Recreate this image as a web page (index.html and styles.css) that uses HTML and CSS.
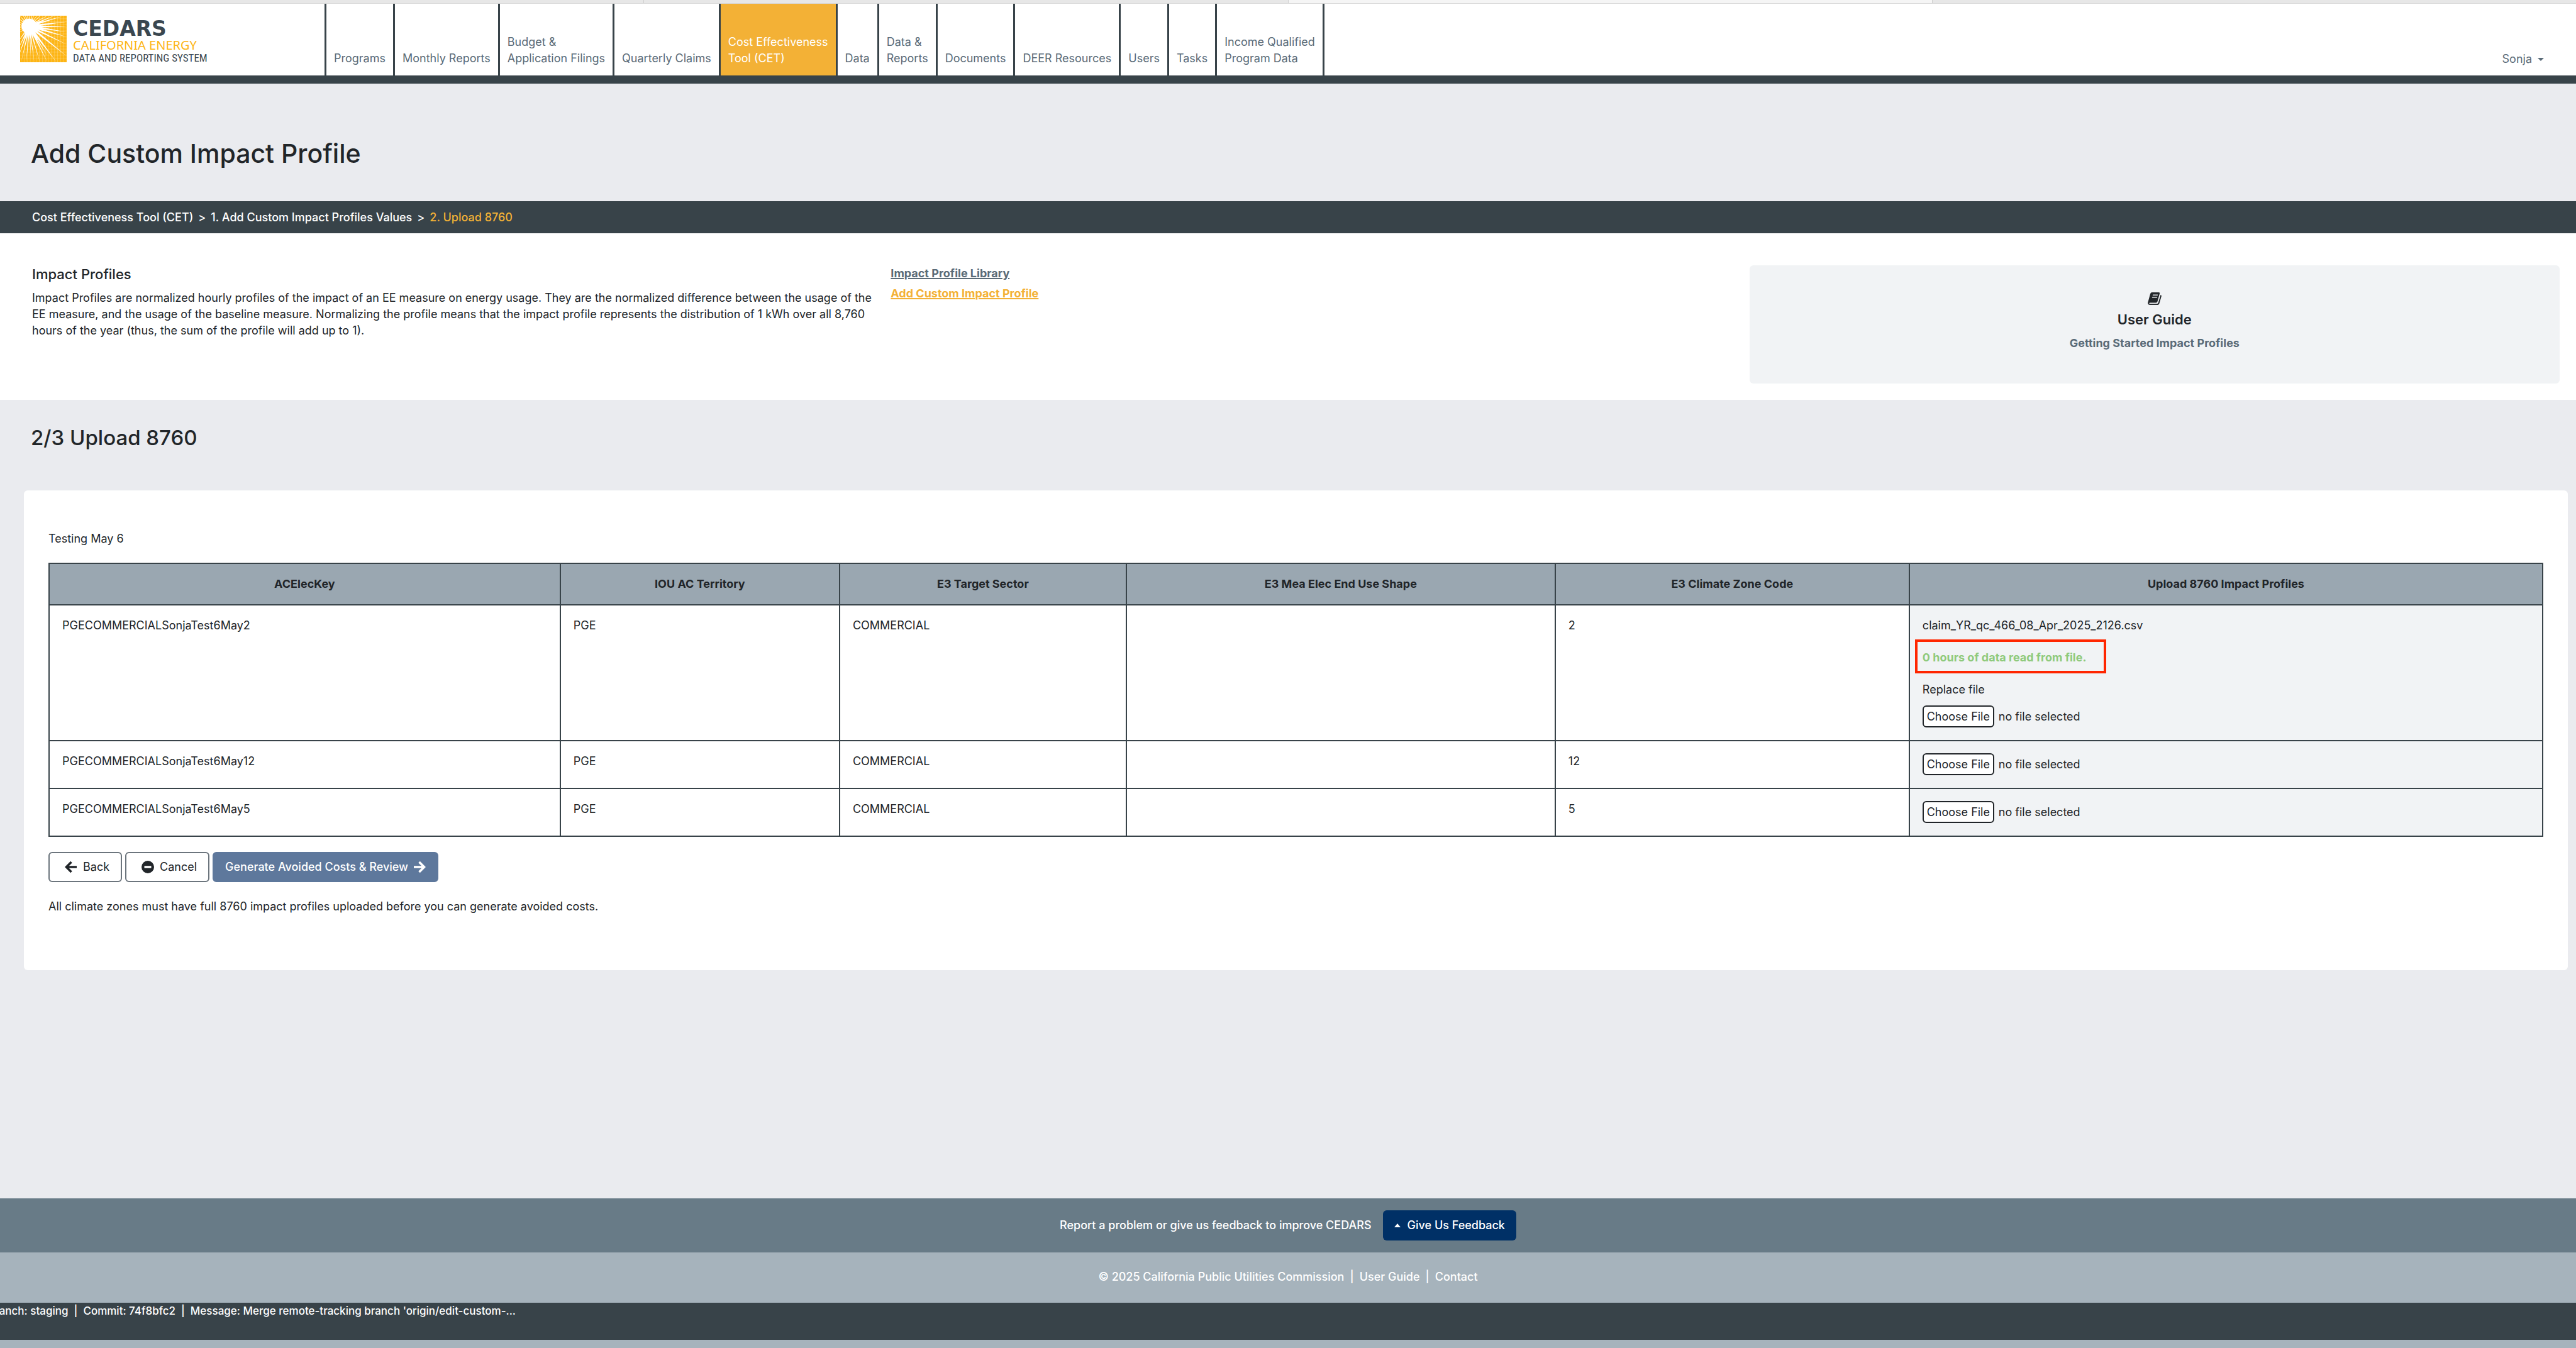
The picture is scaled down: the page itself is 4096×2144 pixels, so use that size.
FILE: index.html
```html
<!DOCTYPE html>
<html lang="en">
<head>
<meta charset="utf-8">
<meta name="viewport" content="width=device-width, initial-scale=1">
<title>CEDARS - Add Custom Impact Profile</title>
<link rel="stylesheet" href="styles.css">
</head>
<body>
<div class="tab-strip"><span></span><span></span><span class="current"></span><span></span></div>
<header class="site-header">
  <a class="logo" href="#">
    <svg class="logo-sun" viewBox="0 0 92 92" aria-hidden="true">
      <rect width="92" height="92" fill="#fdb515"/>
      <path d="M32 6H92M32 12H92M32 18H92M32 24H92M32 30H92M32 36H92M32 42H92M26 48H92M20 54H92M14 60H92M8 66H92M0 72H92M0 78H92M0 84H92M38 0V92M44 0V92M50 0V92M56 0V92M62 0V92M68 0V92M74 0V92M80 0V92M86 0V92M32 30V92M26 36V92M20 40V92M14 40V92M8 40V92" stroke="#fff" stroke-opacity=".28" stroke-width="1"/>
      <g fill="#fff">
        <circle cx="18" cy="21" r="15"/>
        <path d="M17 21 2 92 20 21ZM17 21 12 92 20 21ZM17 21 21 80 20 21ZM17 21 28 92 20 21ZM17 21 39 92 20 20ZM17 22 54 80 20 20ZM17 23 54 92 20 20ZM17 23 72 92 20 19ZM17 23 92 80 20 19ZM17 23 92 57 19 19ZM17 23 92 42 19 18ZM17 23 90 32 19 18ZM17 23 92 22 19 18ZM17 23 92 12 19 18ZM17 23 84 1 19 18ZM17 23 70 -1 19 18ZM17 22 57 -2 17 19ZM16 21 44 -4 19 21ZM16 21 36 -4 19 21ZM16 21 29 -4 19 21ZM16 21 24 -4 20 21ZM16 21 19 -4 20 21ZM16 21 14 -4 20 21ZM16 21 9 -4 20 21ZM16 21 4 -4 20 21ZM17 22 -3 -2 19 20ZM17 22 -4 5 19 19ZM17 23 -6 11 19 19ZM17 23 -6 17 19 19ZM17 23 -6 23 19 19ZM17 23 -6 29 19 19ZM17 23 -6 36 19 19ZM17 23 -6 44 20 21ZM16 21 -6 54 20 21ZM16 21 -4 66 20 21ZM16 21 -3 80 20 21Z"/>
      </g>
    </svg>
    <span class="logo-text">
      <span class="logo-name">CEDARS</span>
      <span class="logo-state">CALIFORNIA ENERGY</span>
      <span class="logo-system">DATA AND REPORTING SYSTEM</span>
    </span>
  </a>
  <nav class="main-nav">
    <a href="#">Programs</a>
    <a href="#">Monthly Reports</a>
    <a href="#">Budget &amp;<br>Application Filings</a>
    <a href="#">Quarterly Claims</a>
    <a href="#" class="active">Cost Effectiveness<br>Tool (CET)</a>
    <a href="#">Data</a>
    <a href="#">Data &amp;<br>Reports</a>
    <a href="#">Documents</a>
    <a href="#">DEER Resources</a>
    <a href="#">Users</a>
    <a href="#">Tasks</a>
    <a href="#">Income Qualified<br>Program Data</a>
  </nav>
  <button class="user-menu" type="button">Sonja <span class="caret"></span></button>
</header>

<main>
  <h1>Add Custom Impact Profile</h1>
  <nav class="breadcrumb">
    <a href="#">Cost Effectiveness Tool (CET)</a><span>&gt;</span><a href="#">1. Add Custom Impact Profiles Values</a><span>&gt;</span><a href="#" class="current">2. Upload 8760</a>
  </nav>

  <section class="intro">
    <div class="intro-text">
      <h2>Impact Profiles</h2>
      <p>Impact Profiles are normalized hourly profiles of the impact of an EE measure on energy usage. They are the normalized difference between the usage of the EE measure, and the usage of the baseline measure. Normalizing the profile means that the impact profile represents the distribution of 1 kWh over all 8,760 hours of the year (thus, the sum of the profile will add up to 1).</p>
    </div>
    <div class="intro-links">
      <a href="#">Impact Profile Library</a>
      <a href="#" class="current">Add Custom Impact Profile</a>
    </div>
    <div class="guide">
      <svg class="book" viewBox="0 0 22 20" aria-hidden="true">
        <path fill="#212529" fill-rule="evenodd" d="M6.500 0H17.500Q19.500 0 19 2L15.500 14.500Q15 16.500 13 16.500H3.500Q2 16.500 2.300 17.500Q2.500 18.300 4 18.300H14.500Q16.300 18.300 16.800 16.500L20.500 4Q22.200 4.500 21.700 6.500L18.500 17.500Q17.700 20 15.500 20H4Q0 20 .2 16.500L4 2.500Q4.700 0 6.500 0ZM8.200 3.500 7.800 5H15.800L16.200 3.500ZM7.200 7 6.800 8.500H14.800L15.200 7Z"/>
      </svg>
      <h3>User Guide</h3>
      <a href="#">Getting Started Impact Profiles</a>
    </div>
  </section>

  <h2 class="step-title">2/3 Upload 8760</h2>

  <section class="panel">
    <p class="profile-name">Testing May 6</p>
    <table>
      <colgroup>
        <col class="col-key"><col class="col-territory"><col class="col-sector"><col class="col-shape"><col class="col-zone"><col>
      </colgroup>
      <thead>
        <tr><th>ACElecKey</th><th>IOU AC Territory</th><th>E3 Target Sector</th><th>E3 Mea Elec End Use Shape</th><th>E3 Climate Zone Code</th><th>Upload 8760 Impact Profiles</th></tr>
      </thead>
      <tbody>
        <tr>
          <td>PGECOMMERCIALSonjaTest6May2</td><td>PGE</td><td>COMMERCIAL</td><td></td><td>2</td>
          <td class="upload">
            <p>claim_YR_qc_466_08_Apr_2025_2126.csv</p>
            <p class="hours">0 hours of data read from file.</p>
            <label class="replace" for="file-2">Replace file</label>
            <div class="file"><input type="file" id="file-2"><span>no file selected</span></div>
          </td>
        </tr>
        <tr>
          <td>PGECOMMERCIALSonjaTest6May12</td><td>PGE</td><td>COMMERCIAL</td><td></td><td>12</td>
          <td class="upload"><div class="file"><input type="file" id="file-12"><label for="file-12">no file selected</label></div></td>
        </tr>
        <tr>
          <td>PGECOMMERCIALSonjaTest6May5</td><td>PGE</td><td>COMMERCIAL</td><td></td><td>5</td>
          <td class="upload"><div class="file"><input type="file" id="file-5"><label for="file-5">no file selected</label></div></td>
        </tr>
      </tbody>
    </table>
    <div class="actions">
      <button type="button" class="btn">
        <svg class="icon" viewBox="0 0 20 20" aria-hidden="true"><path d="M19 10H4M10.500 2 2.500 10l8 8" fill="none" stroke="currentColor" stroke-width="3.600"/></svg>Back
      </button>
      <button type="button" class="btn">
        <svg class="icon" viewBox="0 0 20 20" aria-hidden="true"><path fill="currentColor" fill-rule="evenodd" d="M10 0a10 10 0 1 1 0 20a10 10 0 1 1 0-20ZM4.500 8.300v3.400h11V8.300Z"/></svg>Cancel
      </button>
      <button type="button" class="btn primary">Generate Avoided Costs &amp; Review
        <svg class="icon" viewBox="0 0 20 20" aria-hidden="true"><path d="M1 10H16M9.500 2l8 8-8 8" fill="none" stroke="currentColor" stroke-width="3.600"/></svg>
      </button>
    </div>
    <p class="note">All climate zones must have full 8760 impact profiles uploaded before you can generate avoided costs.</p>
  </section>
</main>

<footer>
  <div class="feedback">
    <span>Report a problem or give us feedback to improve CEDARS</span>
    <button type="button"><span class="caret up"></span>Give Us Feedback</button>
  </div>
  <div class="legal">© 2025 California Public Utilities Commission<span>|</span><a href="#">User Guide</a><span>|</span><a href="#">Contact</a></div>
  <div class="build">Branch: staging<span>|</span>Commit: 74f8bfc2<span>|</span>Message: Merge remote-tracking branch 'origin/edit-custom-...</div>
</footer>
</body>
</html>
```
FILE: styles.css
```css
* { box-sizing: border-box; }

body {
  margin: 0;
  min-height: 100vh;
  display: flex;
  flex-direction: column;
  background: #eaebef;
  color: #212529;
  font: 400 18px/26px Inter, "Liberation Sans", sans-serif;
}

h1, h2, h3, p { margin: 0; font-weight: 500; }
p { font-weight: 400; }
a { color: inherit; text-decoration: none; }
button, input { font: inherit; color: inherit; }
button { cursor: pointer; }

.caret {
  border: 5px solid transparent;
  border-top-color: currentColor;
  border-bottom: 0;
}
.caret.up {
  border-top: 0;
  border-bottom: 6px solid currentColor;
}

/* Strip above the header */
.tab-strip {
  display: flex;
  height: 6px;
  border-bottom: 1px solid #d9d9d9;
  background: #e7e7e7;
}
.tab-strip span { flex: 1; border-right: 1px solid #cfcfcf; }
.tab-strip .current { background: #f5f5f5; }
.tab-strip span:last-child { border: 0; }

/* Header */
.site-header {
  display: flex;
  height: 127px;
  border-bottom: 13px solid #384349;
  background: #fff;
  color: #5a6b78;
}
.logo {
  display: flex;
  gap: 10px;
  width: 516px;
  padding: 19px 0 0 32px;
}
.logo-sun { width: 74px; height: 74px; }
.logo-text { display: flex; flex-direction: column; white-space: nowrap; }
.logo-name {
  padding-top: 5px;
  font: 700 33px/32px "DejaVu Sans", sans-serif;
  color: #3a4750;
}
.logo-state {
  font: 400 20px/20px "Noto Sans", sans-serif;
  color: #fdb515;
}
.logo-system {
  font: 400 17px/20px "Roboto Condensed", Roboto, sans-serif;
  color: #3a4750;
}
.main-nav {
  display: flex;
  border-left: 3px solid #384349;
}
.main-nav a {
  display: flex;
  align-items: flex-end;
  padding: 0 12px 14px;
  border-right: 3px solid #384349;
  white-space: nowrap;
}
.main-nav .active { background: #f3b136; color: #fff; }
.user-menu {
  display: flex;
  align-items: center;
  gap: 9px;
  align-self: flex-end;
  margin-left: auto;
  padding: 0 51px 13px 0;
  border: 0;
  background: none;
}

/* Page title and breadcrumb */
main { flex: 1; }
h1 {
  padding: 87px 49px 52px;
  font-size: 41px;
  line-height: 48px;
}
.breadcrumb {
  padding: 13px 51px 12px;
  background: #384349;
  color: #fff;
  font-weight: 500;
}
.breadcrumb span { margin: 0 8px; }
.breadcrumb .current { color: #f3b136; }

/* Intro */
.intro {
  display: grid;
  grid-template-columns: repeat(3, 1fr);
  padding: 51px 0 26px;
  background: #fff;
}
.intro-text { margin-right: -26px; padding-left: 51px; }
.intro-text h2 {
  margin-bottom: 11px;
  font-size: 22px;
  line-height: 28px;
}
.intro-links {
  display: flex;
  flex-direction: column;
  align-items: flex-start;
  gap: 6px;
  padding-left: 51px;
  font-weight: 700;
  color: #5a6b78;
}
.intro-links a { text-decoration: underline; text-decoration-thickness: 2px; }
.intro-links .current { color: #f3b136; }
.guide {
  display: flex;
  flex-direction: column;
  align-items: center;
  margin: 0 26px 0 51px;
  padding: 43px 0 51px;
  border-radius: 6px;
  background: #f1f3f5;
}
.book { width: 22px; height: 20px; }
.guide h3 {
  margin: 9px 0 11px;
  font-size: 22px;
  line-height: 28px;
  font-weight: 600;
}
.guide a { font-weight: 700; color: #5a6b78; }

/* Upload panel */
.step-title {
  padding: 40px 49px 64px;
  font-size: 33px;
  line-height: 40px;
}
.panel {
  margin: 0 13px 0 38px;
  padding: 64px 39px 88px;
  border-radius: 6px;
  background: #fff;
}
table {
  width: 100%;
  margin: 25px 0 24px;
  border-collapse: collapse;
  table-layout: fixed;
}
.col-key { width: 20.5%; }
.col-territory { width: 11.2%; }
.col-sector { width: 11.5%; }
.col-shape { width: 17.2%; }
.col-zone { width: 14.2%; }
th, td {
  padding: 19px 20px;
  border: 2px solid #384349;
  vertical-align: top;
  text-align: left;
}
td { padding-bottom: 20px; }
th {
  background: #9aa7b1;
  text-align: center;
  font-weight: 700;
}
.upload { background: #f1f3f5; }
.hours {
  position: relative;
  width: max-content;
  margin: 25px 0;
  color: #8fca7c;
  font-weight: 700;
}
.hours::after {
  content: "";
  position: absolute;
  inset: -16px -32px -12px -12px;
  border: 4px solid #ff2600;
}
.replace { display: block; margin-bottom: 12px; }
.file { display: flex; align-items: center; gap: 7px; }
.file input { width: 114px; height: 35px; overflow: hidden; }
.file input::file-selector-button {
  width: 114px;
  height: 35px;
  margin: 0;
  padding: 0;
  border: 2px solid #212529;
  border-radius: 6px;
  background: #fff;
  font: inherit;
  color: inherit;
}

.actions { display: flex; gap: 5px; }
.btn {
  display: flex;
  align-items: center;
  gap: 9px;
  height: 48px;
  padding: 0 18px;
  border: 2px solid #6c757d;
  border-radius: 6px;
  background: #fff;
}
.icon { width: 20px; height: 20px; margin-left: 6px; }
.primary {
  gap: 8px;
  border-color: #5e789c;
  background: #5e789c;
  color: #fff;
  font-weight: 500;
}
.primary .icon { margin: 0; }
.note { margin-top: 26px; }

/* Footer */
footer { color: #fff; font-weight: 500; }
.feedback {
  display: flex;
  justify-content: center;
  align-items: center;
  gap: 18px;
  padding: 19px 0;
  background: #687b87;
}
.feedback button {
  display: flex;
  align-items: center;
  gap: 11px;
  height: 48px;
  padding: 0 18px;
  border: 0;
  border-radius: 6px;
  background: #003066;
  font-weight: 500;
}
.legal {
  padding: 26px 0 28px;
  background: #a6b3bc;
  text-align: center;
}
.legal span, .build span { margin: 0 9px; }
.build {
  overflow: hidden;
  padding-bottom: 33px;
  border-bottom: 13px solid #a6b3bc;
  background: #384349;
  font-size: 17px;
  text-indent: -19px;
  white-space: nowrap;
}
```
